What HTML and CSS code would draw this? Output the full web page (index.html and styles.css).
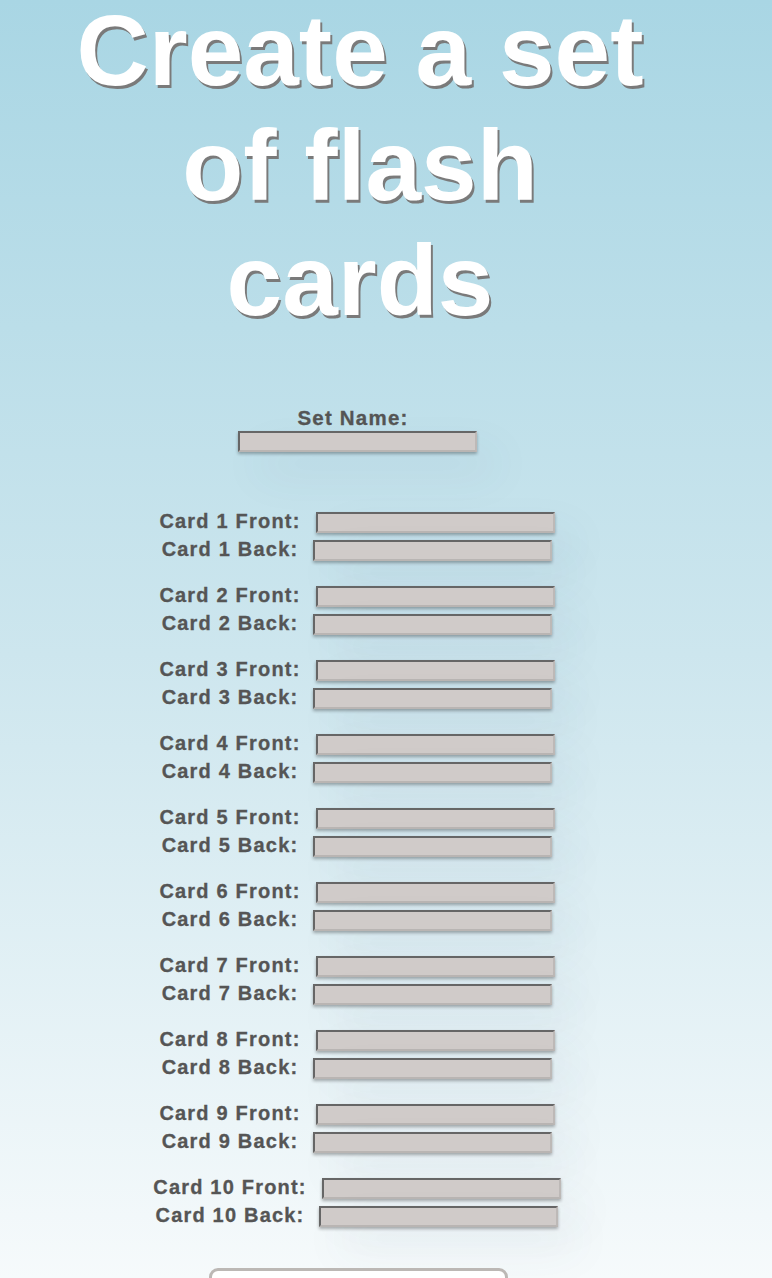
FILE: index.html
```html
<!DOCTYPE html>
<html>
<head>
<meta charset="utf-8">
<link rel="stylesheet" href="styles.css">
</head>
<body>
<main class="page">
  <h1 class="title">Create a set of flash cards</h1>
  <form class="set-form">
    <div class="set-name">
      <label class="label label-set">Set Name:</label>
      <input class="field" type="text">
    </div>
    <div class="cards">
      <div class="pair"><div class="row"><label class="label">Card 1 Front:</label><input class="field" type="text"></div><div class="row"><label class="label">Card 1 Back:</label><input class="field" type="text"></div></div>
      <div class="pair"><div class="row"><label class="label">Card 2 Front:</label><input class="field" type="text"></div><div class="row"><label class="label">Card 2 Back:</label><input class="field" type="text"></div></div>
      <div class="pair"><div class="row"><label class="label">Card 3 Front:</label><input class="field" type="text"></div><div class="row"><label class="label">Card 3 Back:</label><input class="field" type="text"></div></div>
      <div class="pair"><div class="row"><label class="label">Card 4 Front:</label><input class="field" type="text"></div><div class="row"><label class="label">Card 4 Back:</label><input class="field" type="text"></div></div>
      <div class="pair"><div class="row"><label class="label">Card 5 Front:</label><input class="field" type="text"></div><div class="row"><label class="label">Card 5 Back:</label><input class="field" type="text"></div></div>
      <div class="pair"><div class="row"><label class="label">Card 6 Front:</label><input class="field" type="text"></div><div class="row"><label class="label">Card 6 Back:</label><input class="field" type="text"></div></div>
      <div class="pair"><div class="row"><label class="label">Card 7 Front:</label><input class="field" type="text"></div><div class="row"><label class="label">Card 7 Back:</label><input class="field" type="text"></div></div>
      <div class="pair"><div class="row"><label class="label">Card 8 Front:</label><input class="field" type="text"></div><div class="row"><label class="label">Card 8 Back:</label><input class="field" type="text"></div></div>
      <div class="pair"><div class="row"><label class="label">Card 9 Front:</label><input class="field" type="text"></div><div class="row"><label class="label">Card 9 Back:</label><input class="field" type="text"></div></div>
      <div class="pair"><div class="row"><label class="label">Card 10 Front:</label><input class="field" type="text"></div><div class="row"><label class="label">Card 10 Back:</label><input class="field" type="text"></div></div>
    </div>
    <div class="actions">
      <button class="submit" type="submit"></button>
    </div>
  </form>
</main>
</body>
</html>
```

FILE: styles.css
```css
html, body {
  margin: 0;
  padding: 0;
}
body {
  min-height: 1278px;
  background: linear-gradient(180deg, #a9d6e4 0%, #cde6ee 50%, #f8fbfc 100%);
  font-family: "Liberation Sans", Arial, sans-serif;
  overflow: hidden;
}
.page {
  width: 714px;
}
.title {
  margin: -7px 0 0 0;
  padding: 0 60px 0 66px;
  font-size: 100px;
  line-height: 115px;
  font-weight: bold;
  color: #ffffff;
  text-align: center;
  text-shadow: 2px 3px 0 #7a7a7a;
}
.set-form {
  margin-top: 69px;
  display: flex;
  flex-direction: column;
  align-items: center;
}
.set-name {
  display: flex;
  flex-direction: column;
  align-items: center;
  gap: 2px;
}
.label {
  font-size: 20px;
  letter-spacing: 1.2px;
  font-weight: bold;
  color: #555555;
  -webkit-text-stroke: 0.3px #555555;
  line-height: 22px;
  white-space: nowrap;
}
.label-set {
  font-size: 20.5px;
  margin-right: 8px;
}
.field {
  box-sizing: border-box;
  width: 239px;
  height: 21px;
  margin: 0;
  padding: 0 4px;
  background: #d0cbc9;
  border-style: solid;
  border-width: 2px 2px 2px 2px;
  border-color: #666666 #bdb9b7 #b9b5b3 #666666;
  box-shadow: 0 2px 3px rgba(0, 0, 0, 0.3), 20px 22px 45px rgba(60, 90, 110, 0.08);
  outline: none;
}
.cards {
  margin-top: 55px;
  display: flex;
  flex-direction: column;
  gap: 18px;
}
.pair {
  display: flex;
  flex-direction: column;
}
.row {
  height: 28px;
  display: flex;
  align-items: center;
  justify-content: center;
  gap: 15px;
}
.row .field {
  margin-top: 3px;
}
.actions {
  margin-top: 39px;
}
.submit {
  display: block;
  width: 299px;
  height: 40px;
  margin: 0 0 0 2px;
  background: #ffffff;
  border: 3px solid #bcb8b5;
  border-radius: 9px;
}
```
